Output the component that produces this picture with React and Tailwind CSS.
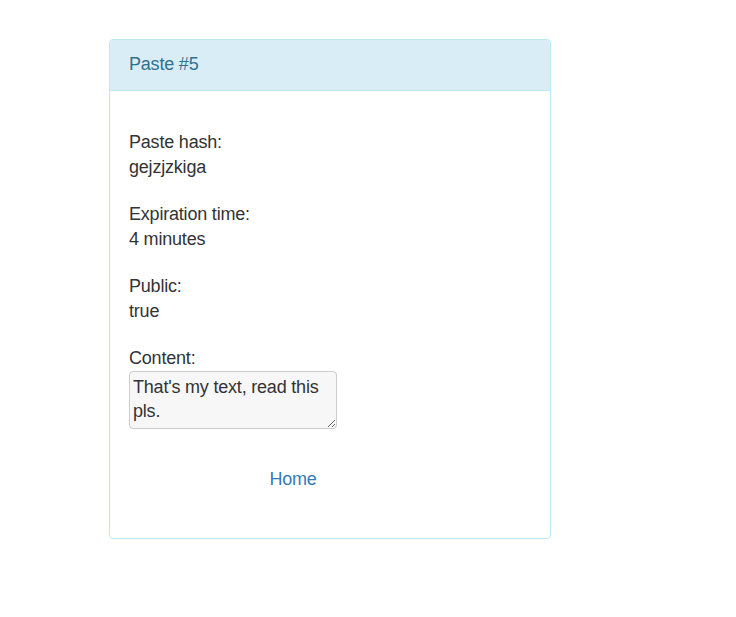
import React from "react";

const fields = [
  { label: "Paste hash:", value: "gejzjzkiga" },
  { label: "Expiration time:", value: "4 minutes" },
  { label: "Public:", value: "true" },
];

export default function App() {
  return (
    <div className="min-h-[617px] bg-white pt-[39px] pl-[109px] font-['Liberation_Sans',Arial,sans-serif] text-[#333]">
      <div className="w-[442px] rounded border border-[#bce8f1]">
        {/* Heading */}
        <div className="flex h-[51px] items-center rounded-t border-b border-[#bce8f1] bg-[#d9edf7] px-[19px] pb-[2px] text-[18px] tracking-[-0.2px] text-[#31708f]">
          Paste #5
        </div>

        {/* Body */}
        <div className="px-[19px] pt-[38.5px] pb-[46px] text-[18px] leading-[25px] tracking-[-0.2px]">
          {fields.map((f) => (
            <div key={f.label} className="mb-[22px]">
              <div>{f.label}</div>
              <div>{f.value}</div>
            </div>
          ))}
          <div>Content:</div>
          <textarea
            readOnly
            defaultValue="That's my text, read this pls."
            className="block h-[58px] w-[208px] rounded-sm border border-[#ccc] bg-[#f7f7f7] px-[3px] pt-[3px] text-[18px] leading-[24px] tracking-[-0.2px] text-[#333] outline-none"
          />
          <div className="mt-[38px] flex w-[328px] justify-center">
            <a href="#" className="text-[#337ab7]">
              Home
            </a>
          </div>
        </div>
      </div>
    </div>
  );
}
